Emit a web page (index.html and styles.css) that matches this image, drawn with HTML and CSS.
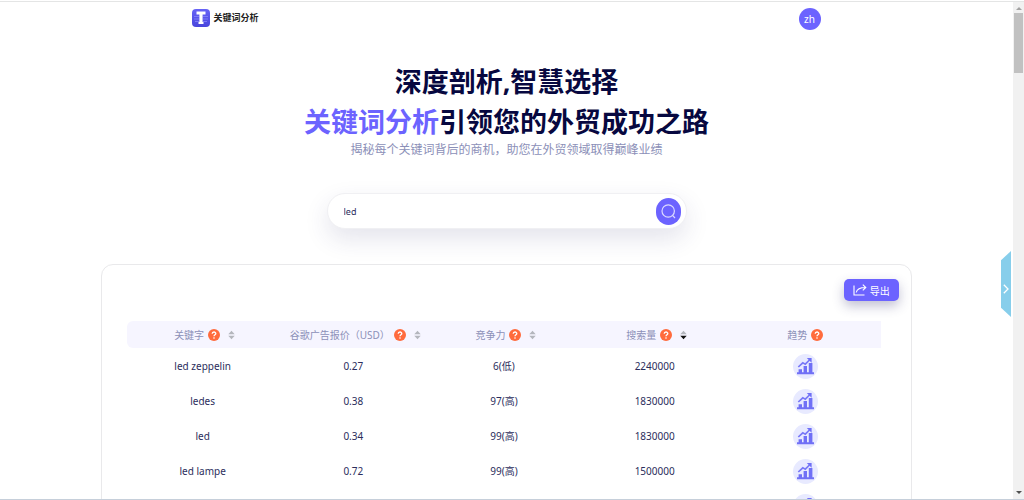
FILE: index.html
```
<!DOCTYPE html>
<html lang="zh-CN">
<head>
  <meta charset="UTF-8" />
  <meta name="viewport" content="width=device-width, initial-scale=1.0" />
  <title>关键词分析</title>
  <link rel="stylesheet" href="styles.css">
</head>
<body>
  <!-- Shared icons -->
  <svg class="sprite" aria-hidden="true">
    <symbol id="help" viewBox="0 0 12 12">
      <circle cx="6" cy="6" r="6" fill="#ff6b3d" />
      <path d="M4.2 4.8C4.2 2.4 7.8 2.5 7.8 4.6C7.8 5.8 6 5.8 6 7.2" fill="none" stroke="#fff" stroke-width="1.3" />
      <circle cx="6" cy="9" r=".8" fill="#fff" />
    </symbol>
    <symbol id="sort" viewBox="0 0 7 10">
      <path d="M3.5 .8L6.7 4.2H.3Z" fill="#b4b6bd" />
      <path d="M3.5 9.2L6.7 5.8H.3Z" />
    </symbol>
    <symbol id="trend" viewBox="0 0 25 25">
      <circle cx="12.5" cy="12.5" r="12.5" fill="#e8eaff" />
      <path d="M4 18.3H21V20.3H4ZM5.6 15.3H9V19H5.6ZM10.6 12H14V19H10.6ZM15.8 9H19.4V19H15.8Z" fill="#7070f6" />
      <path d="M5.3 13L9.8 8.8L12.3 10.2L16.5 6" fill="none" stroke="#7878f7" stroke-width="1.7" />
      <path d="M13.8 4H18.6V8.8Z" fill="#7070f6" />
    </symbol>
  </svg>

  <div class="page">
    <main class="content">
      <header class="topbar">
        <a class="logo" href="#">
          <svg width="18" height="18" viewBox="0 0 18 18">
            <defs>
              <linearGradient id="logoBg" x1="0" y1="0" x2="0" y2="1">
                <stop offset="0" stop-color="#6763f6" />
                <stop offset="1" stop-color="#4845dc" />
              </linearGradient>
            </defs>
            <rect width="18" height="18" rx="4" fill="url(#logoBg)" />
            <path d="M2 7.5H7M2 10H7M3 12.5H7M11 7.5H16M11 10H16M11 12.5H15" stroke="#7d7af8" />
            <path d="M4.5 2.5H13.5V5.5H10.6V13H11.5V15H6.5V13H7.4V5.5H4.5Z" fill="#fff" />
          </svg>
          <span>关键词分析</span>
        </a>
        <button class="lang" type="button">zh</button>
      </header>

      <section class="hero">
        <h1>深度剖析,智慧选择<br><span class="accent">关键词分析</span>引领您的外贸成功之路</h1>
        <p>揭秘每个关键词背后的商机，助您在外贸领域取得巅峰业绩</p>
      </section>

      <form class="search">
        <input type="text" aria-label="关键词" value="led" />
        <button type="button" aria-label="搜索">
          <svg width="15" height="15" viewBox="0 0 15 15" fill="none" stroke="#dcdaff" stroke-width="1.2">
            <circle cx="7.2" cy="7" r="6.2" />
            <path d="M11.3 11.2L14 14" />
          </svg>
        </button>
      </form>

      <section class="card">
        <button class="export" type="button">
          <svg width="14" height="12" viewBox="0 0 14 12" fill="none" stroke="#fff" stroke-width="1.1">
            <path d="M1 1.5V11H11.5" />
            <path d="M3.2 8.5C4 5 6.5 3.5 12.5 3.5M9.8 .7L12.8 3.5L9.8 6.3" />
          </svg>
          <span>导出</span>
        </button>

        <div class="table-wrap">
          <table>
            <thead>
              <tr>
                <th class="sortable"><div class="head">关键字<svg class="help"><use href="#help" /></svg><svg class="sort"><use href="#sort" /></svg></div></th>
                <th class="sortable"><div class="head">谷歌广告报价（USD）<svg class="help"><use href="#help" /></svg><svg class="sort"><use href="#sort" /></svg></div></th>
                <th class="sortable"><div class="head">竞争力<svg class="help"><use href="#help" /></svg><svg class="sort"><use href="#sort" /></svg></div></th>
                <th class="sortable"><div class="head">搜索量<svg class="help"><use href="#help" /></svg><svg class="sort desc"><use href="#sort" /></svg></div></th>
                <th><div class="head">趋势<svg class="help"><use href="#help" /></svg></div></th>
              </tr>
            </thead>
            <tbody>
              <tr>
                <td>led zeppelin</td><td>0.27</td><td>6(低)</td><td>2240000</td>
                <td><button class="trend" type="button" aria-label="趋势"><svg><use href="#trend" /></svg></button></td>
              </tr>
              <tr>
                <td>ledes</td><td>0.38</td><td>97(高)</td><td>1830000</td>
                <td><button class="trend" type="button" aria-label="趋势"><svg><use href="#trend" /></svg></button></td>
              </tr>
              <tr>
                <td>led</td><td>0.34</td><td>99(高)</td><td>1830000</td>
                <td><button class="trend" type="button" aria-label="趋势"><svg><use href="#trend" /></svg></button></td>
              </tr>
              <tr>
                <td>led lampe</td><td>0.72</td><td>99(高)</td><td>1500000</td>
                <td><button class="trend" type="button" aria-label="趋势"><svg><use href="#trend" /></svg></button></td>
              </tr>
              <tr>
                <td></td><td></td><td></td><td></td>
                <td><button class="trend" type="button" aria-label="趋势"><svg><use href="#trend" /></svg></button></td>
              </tr>
            </tbody>
          </table>
        </div>
      </section>

      <!-- Side drawer handle -->
      <button class="drawer" type="button" aria-label="展开">
        <svg width="6" height="10" viewBox="0 0 6 10" fill="none" stroke="#fff" stroke-width="1.3">
          <path d="M.8 .8L5 5L.8 9.2" />
        </svg>
      </button>
    </main>

    <div class="scrollbar">
      <svg width="6" height="3" viewBox="0 0 6 3"><path d="M3 0L6 3H0Z" fill="#a3a3a3" /></svg>
      <div class="thumb"></div>
      <svg width="6" height="3" viewBox="0 0 6 3"><path d="M3 3L6 0H0Z" fill="#505050" /></svg>
    </div>
  </div>
</body>
</html>
```

FILE: styles.css
```
* {
  box-sizing: border-box;
  margin: 0;
  padding: 0;
}

body {
  font-family: "Noto Sans", "Noto Sans CJK SC", sans-serif;
  font-size: 10px;
  color: #2b2d5c;
  background: #fff;
  padding-top: 1px;
  height: 100vh;
  overflow: hidden;
}

button {
  font-family: inherit;
  border: none;
  background: none;
  cursor: pointer;
}

svg {
  display: block;
  flex: none;
}

.sprite {
  position: absolute;
  width: 0;
  height: 0;
}

.page {
  display: flex;
  height: 100%;
  border-top: 1px solid #e4e5e5;
  border-bottom: 1px solid #c6cfda;
}

.content {
  position: relative;
  flex: 1;
  overflow: hidden;
}

/* Header */
.topbar {
  display: flex;
  justify-content: space-between;
  width: 62%;
  margin: 0 auto;
  padding-top: 6px;
}

.logo {
  display: flex;
  align-items: center;
  gap: 3px;
  height: 19px;
  color: #222;
  font-size: 9px;
  font-weight: bold;
  text-decoration: none;
}

.lang {
  width: 22px;
  height: 22px;
  border-radius: 50%;
  background: #6c63ff;
  color: #fff;
  font-size: 10px;
}

/* Hero */
.hero {
  padding-top: 32px;
  text-align: center;
}

.hero h1 {
  font-size: 27px;
  line-height: 40px;
  color: #070840;
}

.hero .accent {
  color: #6c63ff;
}

.hero p {
  font-size: 12px;
  line-height: 16px;
  color: #8c90b8;
}

.search {
  display: flex;
  align-items: center;
  width: 90%;
  max-width: 360px;
  height: 36px;
  margin: 35px auto 0;
  padding: 0 5px 0 16px;
  background: #fff;
  border: 1px solid #f0f0f3;
  border-radius: 18px;
  box-shadow: 0 10px 24px rgba(50, 45, 110, 0.13);
}

.search input {
  flex: 1;
  min-width: 0;
  border: none;
  outline: none;
  background: none;
  color: #2b2d5c;
  font-family: inherit;
  font-size: 9px;
}

.search button {
  display: flex;
  align-items: center;
  justify-content: center;
  width: 25px;
  height: 27px;
  border-radius: 13px;
  background: #6c63ff;
}

/* Results */
.card {
  display: flex;
  flex-direction: column;
  width: 80%;
  margin: 35px auto 0;
  padding: 14px 12px 0 25px;
  border: 1px solid #e9e9eb;
  border-radius: 12px;
}

.export {
  display: flex;
  align-items: center;
  align-self: flex-end;
  justify-content: center;
  gap: 3px;
  width: 55px;
  height: 22px;
  border-radius: 5px;
  background: #6c63ff;
  box-shadow: 0 5px 12px rgba(50, 45, 110, 0.3);
  color: #fff;
  font-size: 10px;
}

.table-wrap {
  padding: 20px 18px 0 0;
}

table {
  width: 100%;
  border-collapse: collapse;
  table-layout: fixed;
}

th {
  height: 27px;
  background: #f6f5ff;
  color: #8c90b8;
  font-weight: normal;
}

th:first-child {
  border-radius: 6px 0 0 6px;
}

th.sortable {
  padding-left: 4px;
}

.head {
  display: flex;
  align-items: center;
  justify-content: center;
  white-space: nowrap;
}

.help {
  width: 12px;
  height: 12px;
  margin-left: 4px;
}

.sort {
  width: 7px;
  height: 10px;
  margin-left: 8px;
  fill: #b4b6bd;
}

.sort.desc {
  fill: #111;
}

td {
  height: 35px;
  text-align: center;
}

.trend {
  display: block;
  margin: 0 auto;
  padding-top: 2px;
}

.trend svg {
  width: 25px;
  height: 25px;
}

.drawer {
  position: absolute;
  top: 249px;
  right: 2px;
  display: flex;
  align-items: center;
  justify-content: center;
  width: 10px;
  height: 66px;
  padding-top: 9px;
  background: #87ceeb;
  clip-path: polygon(0 14%, 100% 0, 100% 100%, 0 86%);
}

.scrollbar {
  display: flex;
  flex-direction: column;
  align-items: center;
  width: 11px;
  padding: 5px 1px;
  background: #f1f1f1;
}

.thumb {
  width: 100%;
  height: 60px;
  margin: 3px 0 auto;
  background: #c1c1c1;
}
```
